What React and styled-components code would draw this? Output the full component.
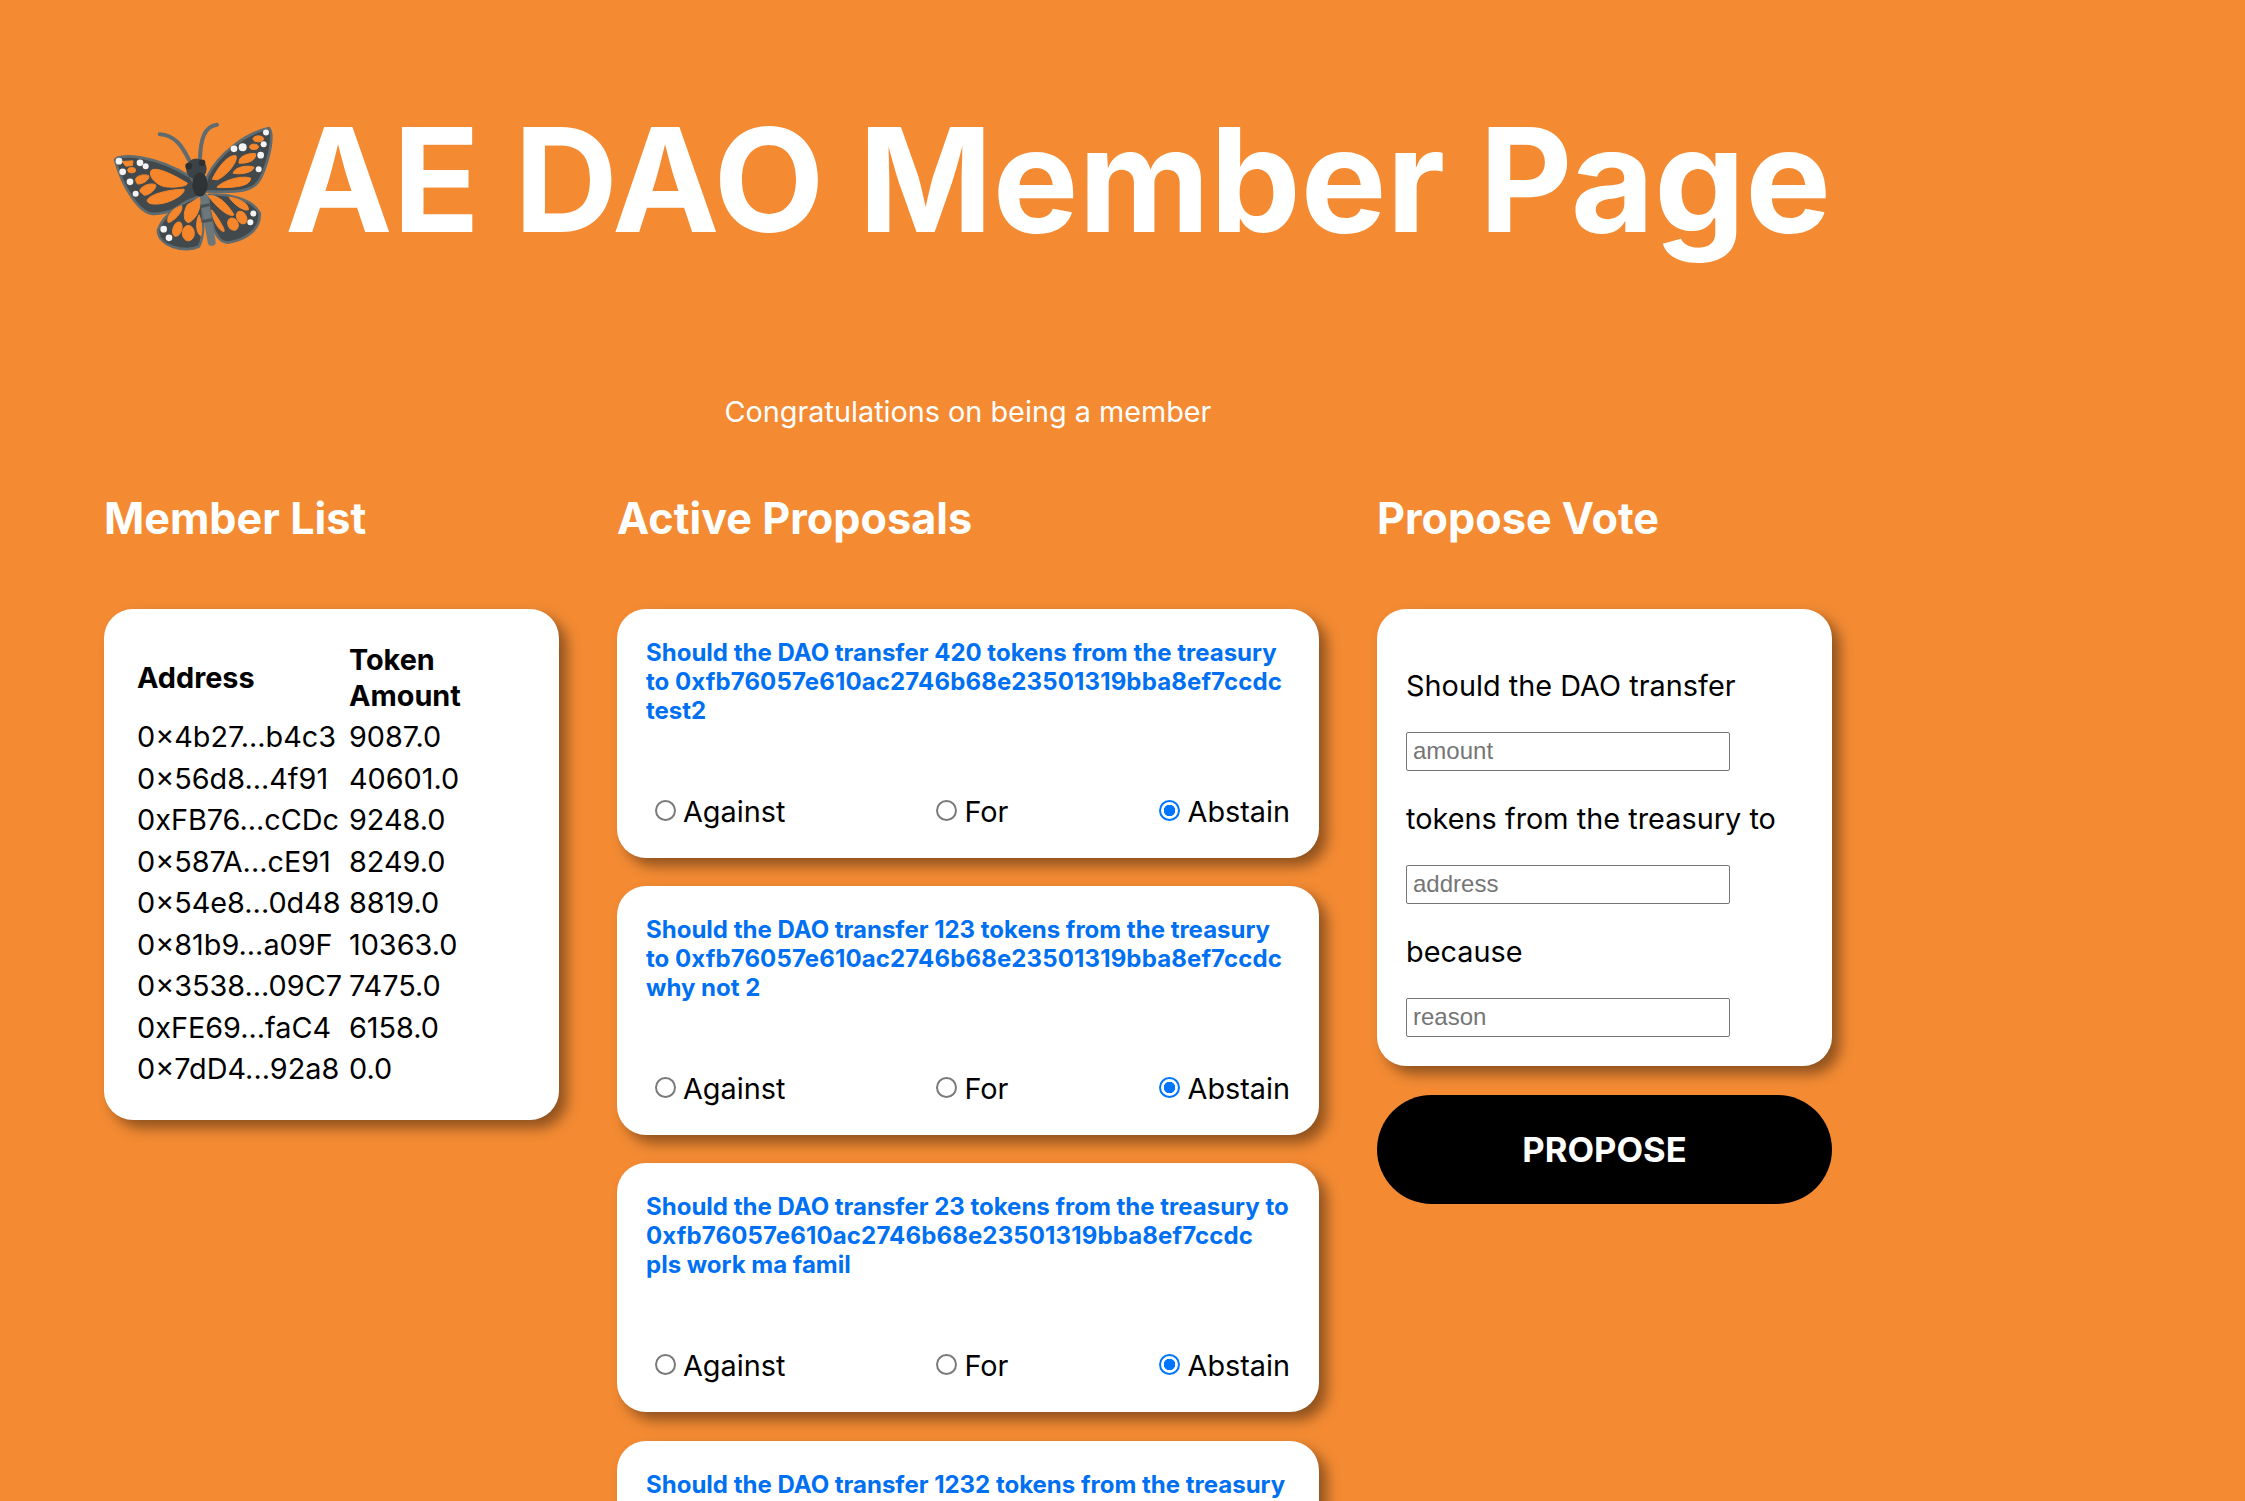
import React from 'react'
import styled, { createGlobalStyle } from 'styled-components'

const members = [
  ['0×4b27...b4c3', '9087.0'],
  ['0×56d8...4f91', '40601.0'],
  ['0xFB76...cCDc', '9248.0'],
  ['0×587A...cE91', '8249.0'],
  ['0×54e8...0d48', '8819.0'],
  ['0×81b9...a09F', '10363.0'],
  ['0×3538...09C7', '7475.0'],
  ['0xFE69...faC4', '6158.0'],
  ['0×7dD4...92a8', '0.0'],
]

const proposals = [
  { amount: 420, reason: 'test2' },
  { amount: 123, reason: 'why not 2' },
  { amount: 23, reason: 'pls work ma famil' },
  { amount: 1232, reason: 'test' },
]

const Butterfly = () => (
  <ButterflyIcon viewBox="60 85 510 410" aria-hidden="true">
    <g fill="none" stroke="#5f6b6f" strokeWidth="12" strokeLinecap="round">
      <path d="M300 210C280 170 258 135 212 133" />
      <path d="M333 205C335 150 345 110 384 105" />
    </g>
    <g fill="#41494c" stroke="#5f6b6f" strokeWidth="8" strokeLinejoin="round">
      <path d="M78 210C90 190 200 195 305 262L335 315C290 350 230 375 190 372C150 370 100 290 78 210Z" />
      <path d="M355 260C390 190 470 130 540 115C555 130 545 200 515 265C490 315 420 305 345 305Z" />
      <path d="M335 320C290 330 225 370 207 420C205 470 290 490 330 470C345 440 345 380 335 320Z" />
      <path d="M360 315C410 310 490 325 512 370C515 420 470 450 420 458C395 460 385 440 375 420C365 380 355 345 360 315Z" />
    </g>
    <g fill="#f5862b" stroke="#f5862b" strokeWidth="3">
      <path d="M185 245C190 230 230 240 295 280C298 290 250 295 225 290C205 285 180 265 185 245Z" />
      <path d="M175 335C170 320 220 300 285 298C290 305 270 325 235 337C210 345 180 345 175 335Z" />
      <path d="M153 305C148 295 180 275 200 285C205 295 180 318 165 316Z" />
      <path d="M140 272C135 260 165 250 180 258C182 270 160 285 145 282Z" />
      <path d="M100 215L132 213L130 227L110 229Z" />
      <ellipse cx="128" cy="241" rx="12" ry="8" />
      <path d="M370 268C385 235 415 195 440 197C450 205 425 250 385 270Z" />
      <path d="M385 290C420 262 470 258 485 265C485 285 450 295 385 293Z" />
      <path d="M432 250C440 228 480 226 495 232C492 250 450 255 432 250Z" />
      <path d="M450 216C450 195 490 188 500 192C502 210 480 222 450 220Z" />
      <ellipse cx="495" cy="171" rx="13" ry="8" />
      <ellipse cx="508" cy="147" rx="16" ry="9" />
      <path d="M332 322C338 350 325 385 300 398C285 400 280 370 295 345Z" />
      <path d="M278 348C285 365 250 398 238 398C230 390 245 355 278 348Z" />
      <ellipse cx="298" cy="430" rx="18" ry="23" />
      <ellipse cx="265" cy="418" rx="13" ry="22" transform="rotate(20 265 418)" />
      <path d="M330 375C340 400 340 430 335 438C322 430 318 400 330 375Z" />
      <path d="M358 318C390 312 420 350 435 375C420 385 380 350 358 318Z" />
      <path d="M420 322C450 325 480 340 478 360C465 365 435 345 420 322Z" />
      <ellipse cx="458" cy="383" rx="14" ry="20" transform="rotate(-30 458 383)" />
      <ellipse cx="432" cy="403" rx="15" ry="19" transform="rotate(-30 432 403)" />
      <path d="M368 360C385 380 410 420 405 425C390 425 370 390 368 360Z" />
    </g>
    <g fill="#f4f4f4">
      <circle cx="90" cy="214" r="10" />
      <circle cx="101" cy="246" r="10" />
      <circle cx="123" cy="276" r="10" />
      <circle cx="140" cy="312" r="9" />
      <circle cx="153" cy="219" r="10" />
      <circle cx="170" cy="229" r="9" />
      <circle cx="531" cy="128" r="9" />
      <circle cx="524" cy="163" r="9" />
      <circle cx="515" cy="196" r="10" />
      <circle cx="509" cy="238" r="9" />
      <circle cx="461" cy="172" r="12" />
      <circle cx="435" cy="177" r="10" />
      <circle cx="493" cy="371" r="9" />
      <circle cx="484" cy="397" r="9" />
      <circle cx="224" cy="418" r="10" />
      <circle cx="240" cy="444" r="10" />
    </g>
    <path d="M345 322L368 456" stroke="#6b777b" strokeWidth="24" strokeLinecap="round" />
    <path d="M335 350L362 345M340 395L370 390" stroke="#4a5356" strokeWidth="9" />
    <circle cx="322" cy="237" r="31" fill="#3c4347" />
    <circle cx="299" cy="229" r="10" fill="#2c3032" />
    <circle cx="339" cy="219" r="10" fill="#2c3032" />
    <ellipse cx="333" cy="284" rx="23" ry="36" fill="#2f3335" />
  </ButterflyIcon>
)

function App() {
  return (
    <Page>
      <GlobalStyle />
      <Title>
        <Butterfly />
        AE DAO Member Page
      </Title>
      <Welcome>Congratulations on being a member</Welcome>
      <Columns>
        <section>
          <ColumnTitle>Member List</ColumnTitle>
          <MemberCard>
            <MemberTable>
              <thead>
                <tr>
                  <th>Address</th>
                  <th>Token Amount</th>
                </tr>
              </thead>
              <tbody>
                {members.map(([address, amount]) => (
                  <tr key={address}>
                    <td>{address}</td>
                    <td>{amount}</td>
                  </tr>
                ))}
              </tbody>
            </MemberTable>
          </MemberCard>
        </section>

        <section>
          <ColumnTitle>Active Proposals</ColumnTitle>
          <ProposalList>
            {proposals.map((proposal, i) => (
              <ProposalCard key={proposal.amount}>
                <ProposalText>
                  Should the DAO transfer {proposal.amount} tokens from the treasury to{' '}
                  <Address>0xfb76057e610ac2746b68e23501319bba8ef7ccdc</Address>
                  <br />
                  {proposal.reason}
                </ProposalText>
                <VoteRow>
                  <VoteOption>
                    <input type="radio" name={`vote-${i}`} />
                    Against
                  </VoteOption>
                  <VoteOption>
                    <input type="radio" name={`vote-${i}`} />
                    For
                  </VoteOption>
                  <VoteOption>
                    <input type="radio" name={`vote-${i}`} defaultChecked />
                    Abstain
                  </VoteOption>
                </VoteRow>
              </ProposalCard>
            ))}
          </ProposalList>
        </section>

        <section>
          <ColumnTitle>Propose Vote</ColumnTitle>
          <ProposeCard>
            <FieldLabel>Should the DAO transfer</FieldLabel>
            <FieldInput placeholder="amount" />
            <FieldLabel>tokens from the treasury to</FieldLabel>
            <FieldInput placeholder="address" />
            <FieldLabel>because</FieldLabel>
            <FieldInput placeholder="reason" />
          </ProposeCard>
          <ProposeButton>PROPOSE</ProposeButton>
        </section>
      </Columns>
    </Page>
  )
}

/*---> Styles <---*/
const GlobalStyle = createGlobalStyle`
  html, body {
    margin: 0;
    background: #f48b33;
  }

  body {
    font-family: Inter, "Liberation Sans", sans-serif;
    font-size: 28.8px;
    color: #000;
  }
`

const Page = styled.div`
  width: 1728px;
  padding-left: 104px;
  color: #fff;
`

const ButterflyIcon = styled.svg`
  width: 170px;
  height: 137px;
  margin: 12px 6px 0 5px;
  flex: none;
`

const Title = styled.h1`
  display: flex;
  align-items: center;
  margin: 0;
  padding-top: 90px;
  height: 180px;
  font-size: 144px;
  font-weight: 700;
  line-height: 180px;
  white-space: nowrap;
`

const Welcome = styled.p`
  margin: 124px 0 0;
  text-align: center;
  font-size: 28.8px;
  line-height: 36px;
`

const Columns = styled.div`
  display: grid;
  grid-template-columns: 455px 702px 455px;
  gap: 58px;
  margin-top: 59px;
`

const ColumnTitle = styled.h2`
  margin: 0 0 62px;
  font-size: 43.2px;
  font-weight: 700;
  line-height: 58px;
`

const Card = styled.div`
  background: #fff;
  color: #000;
  border-radius: 29px;
  box-shadow: 8px 8px 14px rgba(0, 0, 0, 0.42);
`

const MemberCard = styled(Card)`
  box-sizing: border-box;
  height: 511px;
  padding: 30px 30px 0;
`

const MemberTable = styled.table`
  border-spacing: 2px;
  font-size: 28.8px;

  th {
    padding: 1px;
    text-align: left;
    font-weight: 700;
    line-height: 36px;
  }

  td {
    padding: 2px 1px;
    line-height: 35.5px;
    white-space: nowrap;
  }

  th + th,
  td + td {
    padding-left: 4px;
  }
`

const ProposalList = styled.div`
  display: flex;
  flex-direction: column;
  gap: 28.7px;
`

const ProposalCard = styled(Card)`
  box-sizing: border-box;
  height: 248.5px;
  padding: 29px 29px 0;
`

const ProposalText = styled.p`
  margin: 0;
  height: 156px;
  color: #0070f3;
  font-size: 24px;
  font-weight: 700;
  line-height: 29px;
`

const Address = styled.span`
  letter-spacing: 0.14px;
`

const VoteRow = styled.div`
  display: flex;
  justify-content: space-between;
`

const VoteOption = styled.label`
  display: flex;
  align-items: center;
  font-size: 28.8px;
  line-height: 36px;

  input {
    appearance: none;
    box-sizing: border-box;
    width: 21px;
    height: 21px;
    margin: -3px 7.5px 0 8.5px;
    border: 2px solid #7a7a7a;
    border-radius: 50%;
    background: #fff;
  }

  input:checked {
    border-color: #0075ff;
    background: radial-gradient(circle, #0075ff 0 5.5px, #fff 6px);
  }
`

const ProposeCard = styled(Card)`
  box-sizing: border-box;
  height: 457px;
  padding: 59px 29px 0;
`

const FieldLabel = styled.div`
  height: 36px;
  margin-bottom: 28px;
  font-size: 28.8px;
  letter-spacing: 0.04px;
  line-height: 36px;
  white-space: nowrap;
`

const FieldInput = styled.input`
  display: block;
  box-sizing: border-box;
  width: 324px;
  height: 39px;
  margin-bottom: 30px;
  padding: 0 6px 2px;
  border: 1px solid #767676;
  border-radius: 2px;
  font-family: "Liberation Sans", Arial, sans-serif;
  font-size: 24px;
`

const ProposeButton = styled.button`
  display: block;
  width: 455px;
  height: 109px;
  margin-top: 28.5px;
  border: 0;
  border-radius: 55px;
  background: #000;
  color: #fff;
  font-family: Inter, "Liberation Sans", sans-serif;
  font-size: 34.56px;
  font-weight: 700;
`

export default App
